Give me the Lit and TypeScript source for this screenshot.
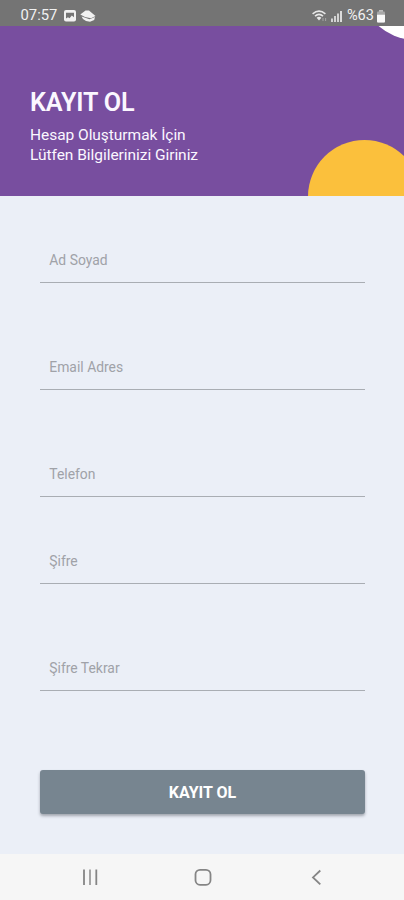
import { LitElement, html, css } from "lit";
import { customElement, property } from "lit/decorators.js";

@customElement("status-bar")
class StatusBar extends LitElement {
  static styles = css`
    :host {
      display: flex;
      height: 26px;
      box-sizing: border-box;
      padding: 4px 18px 0 20.5px;
      background: #747474;
      color: #f1f1f1;
      font-size: 14.8px;
      line-height: 23px;
      justify-content: space-between;
    }
    .group { display: flex; align-items: center; height: 23px; }
    .time { width: 43px; }
    svg { display: block; }
    .percent { margin-left: 4px; font-size: 14.6px; }
    .battery { margin-left: 2px; }
  `;
  render() {
    return html`
      <div class="group">
        <span class="time">07:57</span>
        <svg width="32" height="14" viewBox="0 0 32 14">
          <rect x="0" y="1" width="12" height="11.5" rx="2" fill="#f1f1f1" />
          <path d="M2 3.7h8v4.6L7.8 6.6 5.5 9.2 4 8.2 2 9.6z" fill="#747474" />
          <path d="M16.3 5.6 21.5 1.6 25 1.6 31.5 7 27 9.2 21 8z" fill="#f1f1f1" />
          <path d="M17.6 7.4 25.5 10.2 31 8 30.2 11 26 12.8 22 12 19 10z" fill="#f1f1f1" />
        </svg>
      </div>
      <div class="group">
        <svg width="31" height="14" viewBox="0 0 31 14">
          <g fill="none" stroke="#e8e8e8" stroke-width="1.6">
            <path d="M.6 4.8Q7 -.4 13.4 4.8" />
            <path d="M3 7.1Q7 3.6 11 7.1" />
          </g>
          <path d="M4.6 8.8Q7 6.6 9.4 8.8L7 11.4z" fill="#e8e8e8" />
          <path d="M11 9v3M13.6 9v3" stroke="#a5a5a5" />
          <path d="M20 9.5v3.5M23 7v6" stroke="#d2d2d2" stroke-width="2" />
          <path d="M26 4.5V13" stroke="#d2d2d2" stroke-width="2" />
          <path d="M29 2v11" stroke="#e8e8e8" stroke-width="1.8" />
        </svg>
        <span class="percent">%63</span>
        <svg class="battery" width="10" height="14" viewBox="0 0 10 14">
          <path d="M3 1h4v2H3z" fill="#bdbdbd" />
          <rect x="1" y="2.5" width="8" height="11" rx="1" fill="#a8a8a8" />
          <path d="M1 5.8h8v6.7a1 1 0 0 1-1 1H2a1 1 0 0 1-1-1z" fill="#fafafa" />
        </svg>
      </div>
    `;
  }
}

@customElement("form-field")
class FormField extends LitElement {
  @property() label = "";
  static styles = css`
    :host {
      display: block;
      box-sizing: border-box;
      height: 35px;
      padding: 3px 9.3px 0;
      border-bottom: 1.5px solid #a9adb3;
      color: #a0a2a8;
      font-size: 13.9px;
      line-height: 18px;
    }
  `;
  render() {
    return html`${this.label}`;
  }
}

@customElement("app-root")
class AppRoot extends LitElement {
  static styles = css`
    :host {
      display: flex;
      flex-direction: column;
      height: 900px;
      overflow: hidden;
      background: #ebeff7;
      font-family: Roboto, "Noto Sans", sans-serif;
    }
    .header {
      position: relative;
      height: 170px;
      box-sizing: border-box;
      padding: 61px 30px 0;
      overflow: hidden;
      background: #784e9f;
      color: #fbf7ff;
    }
    h1 {
      margin: 0;
      font-size: 25.2px;
      line-height: 31px;
      font-weight: 600;
      letter-spacing: -0.15px;
    }
    p {
      margin: 7px 0 0;
      font-size: 15.5px;
      line-height: 20px;
      letter-spacing: -0.04px;
    }
    .circle { position: absolute; border-radius: 50%; }
    .sun { left: 308px; top: 114px; width: 113px; height: 113px; background: #fbc03c; }
    .moon { left: 359px; top: -100px; width: 114px; height: 114px; background: #fff; }
    .form {
      flex: 1;
      display: flex;
      flex-direction: column;
      padding: 52px 39px 0 40px;
    }
    .wide { margin-bottom: 72px; }
    .narrow { margin-bottom: 52px; }
    .last { margin-bottom: 79px; }
    button {
      height: 44px;
      border: 0;
      border-radius: 3px;
      padding: 0;
      background: #778590;
      color: #fff;
      font: 700 16px/45px Roboto, "Noto Sans", sans-serif;
      box-shadow: 0 2px 3px rgba(60, 65, 75, 0.42);
    }
    .nav { height: 46px; background: #f6f6f6; }
    .nav svg { display: block; }
  `;
  render() {
    return html`
      <status-bar></status-bar>
      <div class="header">
        <div class="circle moon"></div>
        <div class="circle sun"></div>
        <h1>KAYIT OL</h1>
        <p>Hesap Oluşturmak İçin<br />Lütfen Bilgilerinizi Giriniz</p>
      </div>
      <div class="form">
        <form-field class="wide" label="Ad Soyad"></form-field>
        <form-field class="wide" label="Email Adres"></form-field>
        <form-field class="narrow" label="Telefon"></form-field>
        <form-field class="wide" label="Şifre"></form-field>
        <form-field class="last" label="Şifre Tekrar"></form-field>
        <button>KAYIT OL</button>
      </div>
      <div class="nav">
        <svg width="404" height="46" viewBox="0 0 404 46" fill="none" stroke="#858585">
          <path d="M84 15.5v15.5M96.3 15.5v15.5" stroke-width="1.8" />
          <path d="M90 15.5v15.5" stroke="#a5a5a5" stroke-width="2" />
          <rect x="195.5" y="15.8" width="15" height="15" rx="4.5" stroke-width="1.8" />
          <path d="M320.3 16.5 313 23.4 320.3 30.3" stroke-width="1.8" />
        </svg>
      </div>
    `;
  }
}
